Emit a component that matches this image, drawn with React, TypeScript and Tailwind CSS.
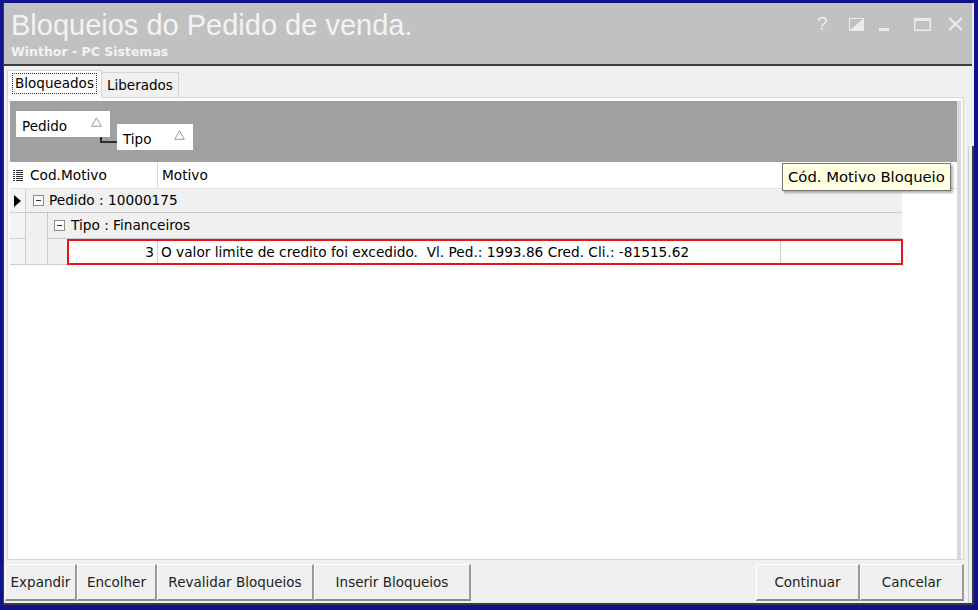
import React from "react";

const ui = "font-['DejaVu_Sans',Tahoma,sans-serif]";

function TitleIcons() {
  return (
    <div className="self-start flex items-end pt-[13px] pr-[9px] text-[#ececec]">
      <span className="font-['Liberation_Sans',sans-serif] text-[19px] leading-[15px] w-[10px]">?</span>
      <svg width="15" height="13" viewBox="0 0 15 13" className="ml-[22px]">
        <rect x="0.5" y="0.5" width="14" height="12" fill="none" stroke="#ececec" />
        <polygon points="1,12 14,1 14,12" fill="#ececec" />
      </svg>
      <svg width="10" height="13" viewBox="0 0 10 13" className="ml-[15px]">
        <rect x="0" y="10" width="10" height="3" fill="#ececec" />
      </svg>
      <svg width="17" height="13" viewBox="0 0 17 13" className="ml-[25px]">
        <rect x="0.75" y="0.75" width="15.5" height="11.5" fill="none" stroke="#ececec" strokeWidth="1.5" />
        <rect x="0" y="0" width="17" height="3" fill="#ececec" />
      </svg>
      <svg width="15" height="14" viewBox="0 0 15 14" className="ml-[17px]">
        <path d="M1 1 L14 13 M14 1 L1 13" stroke="#ececec" strokeWidth="2.2" />
      </svg>
    </div>
  );
}

function GroupChip({ label, w }: { label: string; w: string }) {
  return (
    <div className={`${w} h-[26px] bg-white flex items-start justify-between pl-[6px] pr-[8px] pt-[5px] text-[13.5px] text-black`}>
      <span>{label}</span>
      <svg width="11" height="10" viewBox="0 0 11 10" className="mt-[1px]">
        <polygon points="5.5,0.8 10.3,9.3 0.7,9.3" fill="none" stroke="#9a9a9a" strokeWidth="1" />
      </svg>
    </div>
  );
}

function MinusBox() {
  return (
    <svg width="11" height="11" viewBox="0 0 11 11" className="shrink-0">
      <rect x="0.5" y="0.5" width="10" height="10" fill="#fbfbfb" stroke="#8c8c8c" />
      <rect x="3" y="5" width="5" height="1" fill="#333" />
    </svg>
  );
}

function Btn({ label, w }: { label: string; w: string }) {
  return (
    <div
      className={`${w} h-[37px] bg-[#f0f0f0] border-t border-l border-t-white border-l-white border-r-2 border-b-2 border-r-[#9a9a9a] border-b-[#8a8a8a] flex items-center justify-center text-[13.5px] text-[#222]`}
    >
      {label}
    </div>
  );
}

export default function App() {
  return (
    <div className={`w-[978px] h-[610px] bg-[#12128a] pt-[3px] pl-[3px] pr-[4px] pb-[5px] ${ui}`}>
      <div className="w-full h-full flex flex-col bg-[#f0f0f0] border-l border-[#3c3c3c]">
        {/* caption */}
        <div className="h-[63px] shrink-0 bg-[#c1c1c1] border-b-2 border-[#3d3d3d] mr-[2px] flex justify-between">
          <div className="pl-[7px] pt-[7px]">
            <div className="font-['Liberation_Sans',sans-serif] text-[29px] leading-[31px] text-[#f3f3f3]">
              Bloqueios do Pedido de venda.
            </div>
            <div className="text-[12.5px] font-bold leading-[16px] text-[#f3f3f3] mt-[3px]">Winthor - PC Sistemas</div>
          </div>
          <TitleIcons />
        </div>

        <div className="flex-1 flex min-h-0">
          <div className="flex-1 flex flex-col min-w-0">
            {/* tabs */}
            <div className="h-[31px] shrink-0 flex items-end pl-[3px]">
              <div className="h-[28px] w-[95px] bg-[#fcfcfc] border border-b-0 border-[#d4d4d4] flex items-start justify-center pt-[2px] relative z-10 -mb-px">
                <div className="px-[2px] h-[21px] border border-dotted border-[#333] text-[13.5px] leading-[19px] text-black">
                  Bloqueados
                </div>
              </div>
              <div className="h-[25px] w-[77px] bg-[#f0f0f0] border border-b-0 border-l-0 border-[#d4d4d4] text-[13.5px] leading-[24px] text-black pl-[5px]">
                Liberados
              </div>
            </div>

            {/* tab page */}
            <div className="flex-1 min-h-0 ml-[3px] mr-[4px] border border-[#d6d6d6] bg-[#fcfcfc] pt-[3px] px-[2px] flex flex-col">
              <div className="flex-1 min-h-0 bg-white border-r-4 border-[#d9d9d9] flex flex-col">
                {/* group-by panel */}
                <div className="h-[61px] shrink-0 bg-[#a0a0a0] pl-[6px] pt-[10px] flex items-start relative">
                  <GroupChip label="Pedido" w="w-[94px]" />
                  <div className="ml-[7px] mt-[13px]">
                    <GroupChip label="Tipo" w="w-[76px]" />
                  </div>
                  <div className="absolute left-[90px] top-[36px] w-[17px] h-[6px] border-l-2 border-b-2 border-[#2d2d2d]" />
                </div>

                {/* column header */}
                <div className="h-[27px] shrink-0 flex items-stretch text-[13.7px] text-black border-b border-[#e2e2e2]">
                  <div className="w-[16px] flex items-center justify-center">
                    <svg width="10" height="11" viewBox="0 0 10 11">
                      <rect x="0" y="0" width="2" height="1" fill="#333" />
                      <rect x="3" y="0" width="7" height="1" fill="#333" />
                      <rect x="0" y="2" width="2" height="1" fill="#333" />
                      <rect x="3" y="2" width="7" height="1" fill="#333" />
                      <rect x="0" y="4" width="2" height="1" fill="#333" />
                      <rect x="3" y="4" width="7" height="1" fill="#333" />
                      <rect x="0" y="6" width="2" height="1" fill="#333" />
                      <rect x="3" y="6" width="7" height="1" fill="#333" />
                      <rect x="0" y="8" width="2" height="1" fill="#333" />
                      <rect x="3" y="8" width="7" height="1" fill="#333" />
                      <rect x="0" y="10" width="2" height="1" fill="#333" />
                      <rect x="3" y="10" width="7" height="1" fill="#333" />
                    </svg>
                  </div>
                  <div className="w-[132px] border-r border-[#dcdcdc] flex items-center pl-[4px]">Cod.Motivo</div>
                  <div className="w-[623px] flex items-center pl-[4px]">Motivo</div>
                </div>

                {/* rows */}
                <div className="flex-1 min-h-0 relative flex flex-col text-[13.7px] text-black">
                  {/* group: Pedido */}
                  <div className="h-[24px] flex">
                    <div className="w-[16px] bg-[#f4f4f4] border-r border-b border-[#cfcfcf] flex items-center justify-center">
                      <svg width="7" height="12" viewBox="0 0 7 12">
                        <polygon points="0,0 7,6 0,12" fill="#000" />
                      </svg>
                    </div>
                    <div className="w-[876px] bg-[#f0f0f0] border-b border-[#c9c9c9] flex items-center gap-[5px] pl-[7px]">
                      <MinusBox />
                      <span>Pedido : 10000175</span>
                    </div>
                  </div>
                  {/* group: Tipo */}
                  <div className="h-[26px] flex">
                    <div className="w-[16px] bg-[#f4f4f4] border-r border-b border-[#cfcfcf]" />
                    <div className="w-[21px] bg-[#f0f0f0]" />
                    <div className="w-[855px] bg-[#f0f0f0] border-l border-b border-[#c9c9c9] flex items-center gap-[6px] pl-[6px]">
                      <MinusBox />
                      <span>Tipo : Financeiros</span>
                    </div>
                  </div>
                  {/* data row */}
                  <div className="h-[26px] flex">
                    <div className="w-[16px] bg-[#f4f4f4] border-r border-b border-[#cfcfcf]" />
                    <div className="w-[21px] bg-[#f0f0f0] border-b border-[#cfcfcf]" />
                    <div className="w-[20px] bg-[#f0f0f0] border-l border-b border-[#cfcfcf]" />
                    <div className="w-[836px] border-2 border-[#e8141c] flex">
                      <div className="w-[89px] border-r border-[#cfcfcf] text-right pr-[3px] leading-[22px]">3</div>
                      <div className="w-[623px] border-r border-[#cfcfcf] pl-[3px] leading-[22px] whitespace-pre">
                        {"O valor limite de credito foi excedido.  Vl. Ped.: 1993.86 Cred. Cli.: -81515.62"}
                      </div>
                      <div className="flex-1" />
                    </div>
                  </div>
                </div>

                {/* hint */}
                <div className="absolute left-[782px] top-[163px] z-20 h-[28px] px-[5px] bg-[#ffffe1] border border-[#767676] shadow-[2px_2px_2px_rgba(0,0,0,0.3)] text-[14.8px] leading-[26px] text-black">
                  Cód. Motivo Bloqueio
                </div>
              </div>
            </div>

            {/* buttons */}
            <div className="h-[43px] shrink-0 flex items-start pt-[4px] pl-[1px] pr-[4px]">
              <Btn label="Expandir" w="w-[72px]" />
              <Btn label="Encolher" w="w-[80px]" />
              <Btn label="Revalidar Bloqueios" w="w-[157px]" />
              <Btn label="Inserir Bloqueios" w="w-[157px]" />
              <div className="flex-1" />
              <Btn label="Continuar" w="w-[104px]" />
              <Btn label="Cancelar" w="w-[104px]" />
            </div>
          </div>
          <div className="w-[6px] shrink-0 border-r-2 border-[#3a3a3a] mt-[80px] border-l border-l-[#d0d0d0]" />
        </div>
        <div className="h-[2px] shrink-0 bg-[#3a3a3a]" />
      </div>
    </div>
  );
}
